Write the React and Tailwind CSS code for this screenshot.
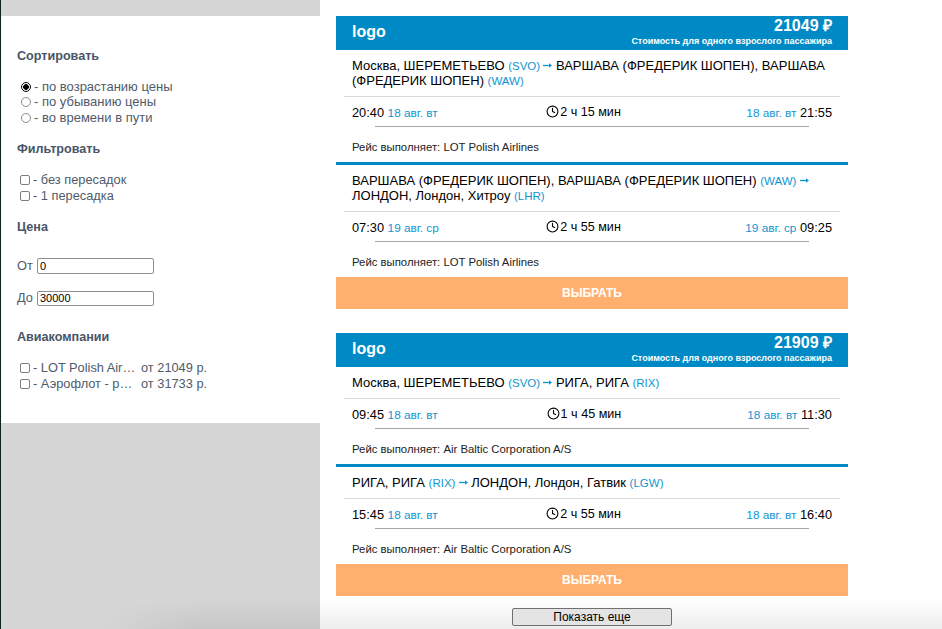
import React from "react";
import { Clock } from "lucide-react";

const flights = [
  {
    price: "21049 ₽",
    legs: [
      {
        route: [
          "Москва, ШЕРЕМЕТЬЕВО ",
          "(SVO)",
          " ВАРШАВА (ФРЕДЕРИК ШОПЕН), ВАРШАВА (ФРЕДЕРИК ШОПЕН) ",
          "(WAW)",
        ],
        from: "20:40",
        fromDate: "18 авг. вт",
        duration: "2 ч 15 мин",
        toDate: "18 авг. вт",
        to: "21:55",
        carrier: "LOT Polish Airlines",
      },
      {
        route: [
          "ВАРШАВА (ФРЕДЕРИК ШОПЕН), ВАРШАВА (ФРЕДЕРИК ШОПЕН) ",
          "(WAW)",
          " ЛОНДОН, Лондон, Хитроу ",
          "(LHR)",
        ],
        from: "07:30",
        fromDate: "19 авг. ср",
        duration: "2 ч 55 мин",
        toDate: "19 авг. ср",
        to: "09:25",
        carrier: "LOT Polish Airlines",
      },
    ],
  },
  {
    price: "21909 ₽",
    legs: [
      {
        route: ["Москва, ШЕРЕМЕТЬЕВО ", "(SVO)", " РИГА, РИГА ", "(RIX)"],
        from: "09:45",
        fromDate: "18 авг. вт",
        duration: "1 ч 45 мин",
        toDate: "18 авг. вт",
        to: "11:30",
        carrier: "Air Baltic Corporation A/S",
      },
      {
        route: ["РИГА, РИГА ", "(RIX)", " ЛОНДОН, Лондон, Гатвик ", "(LGW)"],
        from: "15:45",
        fromDate: "18 авг. вт",
        duration: "2 ч 55 мин",
        toDate: "18 авг. вт",
        to: "16:40",
        carrier: "Air Baltic Corporation A/S",
      },
    ],
  },
];

const Heading = ({ className, children }) => (
  <h3 className={`text-[12.6px] leading-[15px] font-bold text-[#4a5568] ${className}`}>
    {children}
  </h3>
);

const Option = ({ type, checked, children }) => (
  <label className="flex items-center h-[15.5px] pl-[3px]">
    <input
      type={type}
      name={type === "radio" ? "sort" : undefined}
      defaultChecked={checked}
      className={
        type === "radio"
          ? "appearance-none w-[10px] h-[10px] m-0 ml-[1px] mr-[3px] rounded-full border border-[#8c8c8c] bg-white checked:border-black checked:bg-[radial-gradient(circle,#000_45%,#fff_55%)]"
          : "appearance-none w-[10px] h-[10px] m-0 mr-[3px] rounded-[2px] border border-[#7f7f7f] bg-white"
      }
    />
    <span className={type === "radio" ? "flex text-[13px]" : "flex"}>{children}</span>
  </label>
);

const ArrowGlyph = () => (
  <svg width="9" height="7" viewBox="0 0 9 7" className="inline-block align-baseline mb-[1px]">
    <path d="M0 3.5H7" stroke="#0f96d2" strokeWidth="1.3" />
    <path d="M6 1.2L9 3.5L6 5.8Z" fill="#0f96d2" />
  </svg>
);

const Leg = ({ leg }) => (
  <div>
    <div className="px-[16px] py-[8px] text-[13px] leading-[15px] text-black">
      {leg.route[0]}
      <span className="text-[11.5px] leading-none text-[#0f96d2]">{leg.route[1]} </span>
      <ArrowGlyph />
      {leg.route[2]}
      <span className="text-[11.5px] leading-none text-[#0f96d2]">{leg.route[3]}</span>
    </div>
    <div className="mx-[8px] border-t border-[#d9d9d9]"></div>
    <div className="flex justify-between items-center px-[16px] pt-[8px] h-[23px] text-[12.8px] text-black">
      <div>
        {leg.from} <span className="text-[11.8px] text-[#0f96d2]">{leg.fromDate}</span>
      </div>
      <div className="flex items-center gap-[1px] mr-[17px]">
        <Clock size={13} strokeWidth={2} className="-mt-[2px]" />
        <span className="text-[12.6px]">{leg.duration}</span>
      </div>
      <div>
        <span className="text-[11.8px] text-[#0f96d2]">{leg.toDate}</span> {leg.to}
      </div>
    </div>
    <div className="mx-[39px] mt-[6px] border-t border-[#a6a6a6]"></div>
    <div className="px-[16px] pt-[14px] pb-[8px] text-[11.35px] leading-[13px] text-[#222]">
      Рейс выполняет: {leg.carrier}
    </div>
  </div>
);

const FlightCard = ({ flight }) => (
  <article className="w-[512px] bg-white">
    <header className="flex justify-between h-[34px] bg-[#008ac5] text-white px-[16px]">
      <div className="text-[16px] font-bold leading-[31px]">logo</div>
      <div className="text-right">
        <div className="text-[16px] font-bold leading-[20px]">{flight.price}</div>
        <div className="text-[9px] font-bold leading-[10px]">
          Стоимость для одного взрослого пассажира
        </div>
      </div>
    </header>
    <Leg leg={flight.legs[0]} />
    <div className="h-[3px] bg-[#008ac5]"></div>
    <Leg leg={flight.legs[1]} />
    <button className="block w-full h-[32px] bg-[#ffb06f] text-white text-[12px] font-bold text-center">
      ВЫБРАТЬ
    </button>
  </article>
);

const Airline = ({ name, price }) => (
  <Option type="checkbox">
    <span className="w-[108px]">- {name}</span>
    <span>от {price} р.</span>
  </Option>
);

export default function App() {
  return (
    <div
      className="relative flex h-[629px] w-[942px] overflow-hidden bg-white"
      style={{ fontFamily: '"Liberation Sans", Arial, sans-serif' }}
    >
      <aside className="w-[320px] shrink-0 h-full border-l border-[#10201a] bg-[#d6d6d6] pt-[16px]">
        <div className="h-[407px] bg-white px-[16px] pt-[33px] text-[12.8px] leading-[16px] text-[#4f5b6b]">
          <Heading>Сортировать</Heading>
          <div className="mt-[15px]">
            <Option type="radio" checked>- по возрастанию цены</Option>
            <Option type="radio">- по убыванию цены</Option>
            <Option type="radio">- во времени в пути</Option>
          </div>
          <Heading className="mt-[16px]">Фильтровать</Heading>
          <div className="mt-[16px]">
            <Option type="checkbox">- без пересадок</Option>
            <Option type="checkbox">- 1 пересадка</Option>
          </div>
          <Heading className="mt-[16px]">Цена</Heading>
          <div className="mt-[23.5px] flex items-center h-[16px]">
            <span className="w-[20px]">От</span>
            <input
              defaultValue="0"
              className="w-[117px] h-[16px] px-[2px] border border-[#8f8f8f] rounded-[2px] text-[11px] text-black bg-white"
            />
          </div>
          <div className="mt-[16px] flex items-center h-[16px]">
            <span className="w-[20px]">До</span>
            <input
              defaultValue="30000"
              className="w-[117px] h-[15px] px-[2px] border border-[#8f8f8f] rounded-[2px] text-[11px] text-black bg-white"
            />
          </div>
          <Heading className="mt-[23.5px]">Авиакомпании</Heading>
          <div className="mt-[16px]">
            <Airline name="LOT Polish Air…" price="21049" />
            <Airline name="Аэрофлот - р…" price="31733" />
          </div>
        </div>
      </aside>
      <main className="flex-1 pl-[16px] pt-[16px]">
        <div className="flex flex-col gap-[24px]">
          {flights.map((flight) => (
            <FlightCard key={flight.price} flight={flight} />
          ))}
        </div>
        <div className="w-[512px] flex justify-center mt-[12px]">
          <button className="relative z-10 w-[160px] h-[18px] border border-[#707070] rounded-[2px] bg-[#e4e4e4] text-[12px] leading-[16px] text-black">
            Показать еще
          </button>
        </div>
      </main>
      {/* window shadow along the bottom edge */}
      <div className="absolute left-[100px] right-0 bottom-0 h-[30px] pointer-events-none bg-gradient-to-b from-transparent to-black/[0.07] [mask-image:linear-gradient(to_right,transparent,black_100px)]"></div>
    </div>
  );
}
